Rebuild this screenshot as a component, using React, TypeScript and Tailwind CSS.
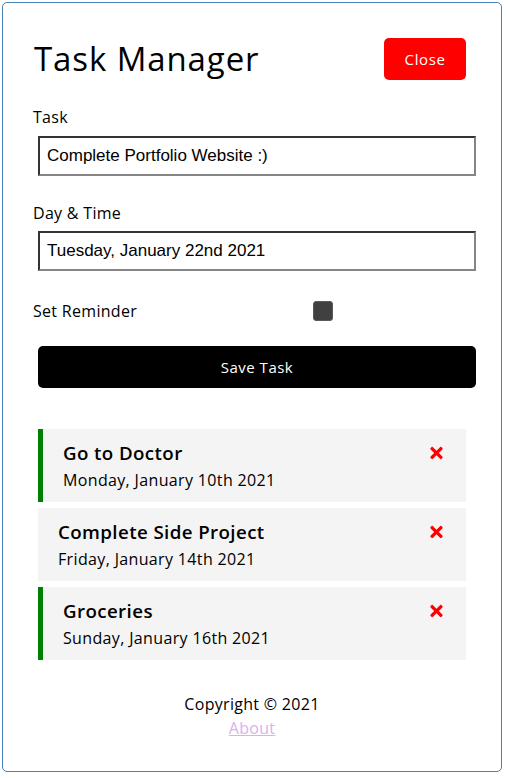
import React from 'react';
import { FaTimes } from 'react-icons/fa';

const tasks = [
  { id: 1, text: 'Go to Doctor', day: 'Monday, January 10th 2021', reminder: true },
  { id: 2, text: 'Complete Side Project', day: 'Friday, January 14th 2021', reminder: false },
  { id: 3, text: 'Groceries', day: 'Sunday, January 16th 2021', reminder: true },
];

const inputCls =
  'block w-[438px] h-[40px] ml-[5px] px-[7px] border-2 border-t-[#333] border-l-[#333] border-r-[#858585] border-b-[#858585] text-[17px] text-black outline-none bg-white';

export default function App() {
  return (
    <div className="min-h-screen bg-white pt-[2px] pl-[2px]" style={{ fontFamily: '"Open Sans", sans-serif' }}>
      <div className="w-[500px] h-[770px] border border-[#4682b4] rounded-[5px] p-[30px] text-black">
        <header className="flex items-center justify-between h-[52px] mb-[20px]">
          <h1 className="text-[33px] font-medium leading-[48px] ml-[1px] tracking-[0.9px]">Task Manager</h1>
          <button className="w-[82px] h-[42px] mr-[5px] rounded-[5px] bg-[#ff0000] text-white text-[15px] tracking-[0.6px]">
            Close
          </button>
        </header>

        <form>
          <label className="block text-[16px] leading-[24px] tracking-[0.3px]">Task</label>
          <input
            className={inputCls + ' mt-[7px]'}
            style={{ fontFamily: '"Liberation Sans", Arial, sans-serif' }}
            defaultValue="Complete Portfolio Website :)"
          />
          <label className="block text-[16px] leading-[24px] mt-[25px] tracking-[0.3px]">Day &amp; Time</label>
          <input
            className={inputCls + ' mt-[6px]'}
            style={{ fontFamily: '"Liberation Sans", Arial, sans-serif' }}
            defaultValue="Tuesday, January 22nd 2021"
          />
          <div className="flex items-center h-[30px] mt-[25px]">
            <label className="w-[280px] text-[16px] leading-[24px] tracking-[0.3px]">Set Reminder</label>
            <div className="w-[20px] h-[20px] rounded-[3px] bg-[#404040] border border-[#5a5a5a]" />
          </div>
          <button
            type="button"
            className="block w-[438px] h-[42px] ml-[5px] mt-[20px] rounded-[5px] bg-black text-white text-[15px] tracking-[0.5px]"
          >
            Save Task
          </button>
        </form>

        <div className="mt-[41px] flex flex-col gap-[6px]">
          {tasks.map((t) => (
            <div
              key={t.id}
              className={
                'w-[428px] h-[73px] ml-[5px] bg-[#f4f4f4] py-[10px] pr-[20px] ' +
                (t.reminder ? 'border-l-[5px] border-[#008000] pl-[20px]' : 'pl-[20px]')
              }
            >
              <h3 className="flex items-center justify-between text-[18.72px] font-semibold leading-[28px] tracking-[0.4px]">
                {t.text}
                <FaTimes className="text-[#ff0000] w-[13px] h-[18px] mr-[3px] cursor-pointer" />
              </h3>
              <p className="text-[16px] leading-[24px] mt-[1px] tracking-[0.35px]">{t.day}</p>
            </div>
          ))}
        </div>

        <footer className="mt-[32px] text-center text-[16px] leading-[24px] tracking-[0.3px]">
          <p>Copyright &copy; 2021</p>
          <a href="#" className="underline text-[#dab0f0]">
            About
          </a>
        </footer>
      </div>
    </div>
  );
}
